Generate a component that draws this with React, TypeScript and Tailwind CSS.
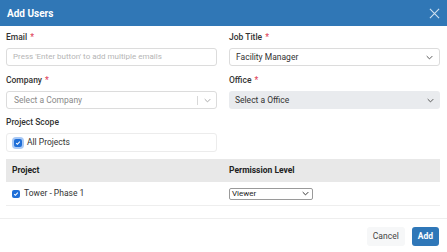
import React from 'react'

function Chevron({ className = '' }: { className?: string }) {
    return (
        <svg viewBox="0 0 10 6" className={`w-[7px] h-[5px] ${className}`} fill="none" stroke="currentColor" strokeWidth="1.4">
            <path d="M1 1l4 4 4-4" />
        </svg>
    )
}

function Check() {
    return (
        <svg viewBox="0 0 10 10" className="w-[6px] h-[6px]" fill="none" stroke="white" strokeWidth="1.8">
            <path d="M2 5.2l2 2 4-4.4" />
        </svg>
    )
}

function Label({ text, required }: { text: string; required?: boolean }) {
    return (
        <div className="h-[21px] flex items-center text-[8.5px] font-medium text-[#333]">
            {text}
            {required && <span className="text-[#e0435a] ml-[3px]">*</span>}
        </div>
    )
}

export default function App() {
    return (
        <div className="w-[447px] h-[252px] bg-white overflow-hidden flex flex-col" style={{ fontFamily: 'Roboto, "Liberation Sans", sans-serif' }}>
            {/* header */}
            <div className="h-[26px] bg-[#3077b6] flex items-center justify-between pl-[7px] pr-[7px]">
                <span className="text-white text-[10px] font-bold">Add Users</span>
                <svg viewBox="0 0 12 12" className="w-[11px] h-[11px]" fill="none" stroke="#cfe0f0" strokeWidth="1.2">
                    <path d="M1 1l10 10M11 1L1 11" />
                </svg>
            </div>

            {/* form */}
            <div className="pl-[6px] pr-[7px] pt-[1px]">
                <div className="grid grid-cols-2 gap-x-[12px]">
                    <div>
                        <Label text="Email" required />
                        <div className="h-[18px] border border-[#dcdcdc] rounded-[3px] flex items-center px-[6px] text-[8px] text-[#b5b5b5]">
                            Press 'Enter button' to add multiple emails
                        </div>
                    </div>
                    <div>
                        <Label text="Job Title" required />
                        <div className="h-[18px] border border-[#dcdcdc] rounded-[3px] flex items-center justify-between pl-[6px] pr-[6px] text-[8.5px] text-[#333]">
                            Facility Manager
                            <Chevron className="text-[#555]" />
                        </div>
                    </div>
                    <div className="mt-[4px]">
                        <Label text="Company" required />
                        <div className="h-[18px] border border-[#dcdcdc] rounded-[3px] flex items-center justify-between pl-[7px] pr-[5px] text-[8.5px] text-[#8a8a8a]">
                            Select a Company
                            <div className="flex items-center gap-[6px]">
                                <div className="w-px h-[9px] bg-[#d8d8d8]" />
                                <Chevron className="text-[#a8a8a8]" />
                            </div>
                        </div>
                    </div>
                    <div className="mt-[4px]">
                        <Label text="Office" required />
                        <div className="h-[18px] rounded-[3px] bg-[#e9ebee] flex items-center justify-between pl-[6px] pr-[6px] text-[8.5px] text-[#333]">
                            Select a Office
                            <Chevron className="text-[#555]" />
                        </div>
                    </div>
                    <div className="mt-[3px]">
                        <Label text="Project Scope" />
                        <div className="h-[19px] border border-[#ececec] rounded-[3px] flex items-center gap-[5px] pl-[7px] text-[8.5px] text-[#333]">
                            <div className="w-[8px] h-[8px] rounded-[2px] bg-[#1f6fd8] flex items-center justify-center shadow-[0_0_0_2px_#a9c9f5]">
                                <Check />
                            </div>
                            All Projects
                        </div>
                    </div>
                </div>

                {/* table */}
                <div className="mt-[7px]">
                    <div className="grid grid-cols-2 h-[23px] bg-[#e8e8e8] items-center text-[8.5px] font-bold text-[#222]">
                        <div className="px-[6px]">Project</div>
                        <div className="px-[6px]">Permission Level</div>
                    </div>
                    <div className="grid grid-cols-2 h-[24px] items-center border-b border-[#eeeeee] text-[8.5px] text-[#333]">
                        <div className="px-[6px] flex items-center gap-[4px]">
                            <div className="w-[8px] h-[8px] rounded-[2px] bg-[#1f6fd8] flex items-center justify-center">
                                <Check />
                            </div>
                            Tower - Phase 1
                        </div>
                        <div className="px-[6px]">
                            <div className="w-[84px] h-[12px] border border-[#9a9a9a] rounded-[2px] flex items-center justify-between pl-[2px] pr-[3px] text-[8px] text-[#222]">
                                Viewer
                                <Chevron className="text-[#333]" />
                            </div>
                        </div>
                    </div>
                </div>
            </div>

            {/* footer */}
            <div className="mt-[12px] border-t border-[#eeeeee] flex justify-end items-center gap-[7px] pt-[8px] pr-[8px]">
                <button className="h-[19px] px-[6px] rounded-[3px] bg-[#f6f7f8] text-[8.5px] text-[#444]">Cancel</button>
                <button className="h-[19px] px-[6px] rounded-[3px] bg-[#2f77b8] text-[8.5px] font-bold text-white">Add</button>
            </div>
        </div>
    )
}
